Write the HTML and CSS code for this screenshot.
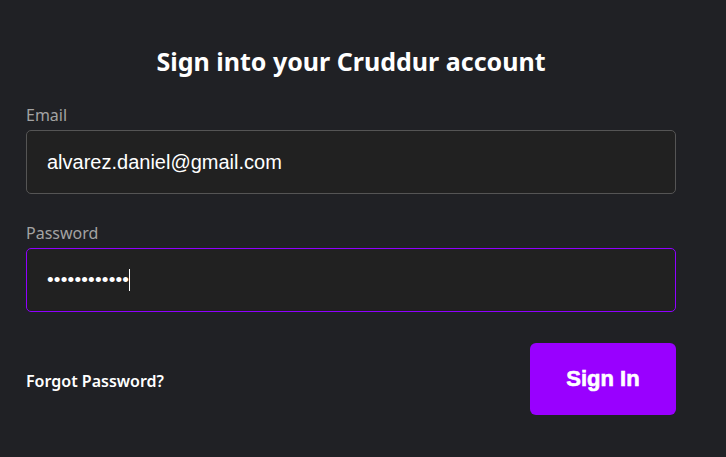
FILE: index.html
```html
<!DOCTYPE html>
<html>
<head>
<meta charset="utf-8">
<link rel="stylesheet" href="styles.css">
</head>
<body>
<main class="signin">
  <h1 class="title">Sign into your Cruddur account</h1>
  <div class="field field-email">
    <label class="label">Email</label>
    <div class="input">alvarez.daniel@gmail.com</div>
  </div>
  <div class="field">
    <label class="label">Password</label>
    <div class="input focused"><span class="dots">••••••••••••</span><span class="caret"></span></div>
  </div>
  <div class="actions">
    <a class="forgot">Forgot Password?</a>
    <button class="submit">Sign In</button>
  </div>
</main>
</body>
</html>
```
FILE: styles.css
```css
html, body {
  margin: 0;
  padding: 0;
  background: #202125;
  height: 100%;
}
body {
  font-family: "Noto Sans", "Open Sans", sans-serif;
  color: #fff;
}
.signin {
  width: 650px;
  margin-left: 26px;
  padding-top: 44px;
  display: flex;
  flex-direction: column;
}
.title {
  margin: 0 0 26px;
  text-align: center;
  font-size: 25px;
  font-weight: 700;
  line-height: 34px;
}
.field {
  display: flex;
  flex-direction: column;
}
.field-email {
  margin-bottom: 28px;
}
.label {
  color: #a3a3a3;
  font-size: 16px;
  line-height: 22px;
  margin-bottom: 4px;
}
.input {
  box-sizing: border-box;
  height: 64px;
  border: 1px solid #555555;
  border-radius: 5px;
  background: #212121;
  padding: 0 20px;
  display: flex;
  align-items: center;
  font-family: "Liberation Sans", Arial, sans-serif;
  font-size: 20px;
  color: #fff;
}
.input.focused {
  border-color: #8f00ff;
}
.dots {
  font-size: 19px;
  letter-spacing: 0.2px;
}
.caret {
  display: inline-block;
  width: 1px;
  height: 22px;
  background: #fff;
}
.actions {
  margin-top: 31px;
  display: flex;
  align-items: center;
  justify-content: space-between;
}
.forgot {
  font-size: 16px;
  font-weight: 600;
  color: #fff;
  margin-top: 4px;
}
.submit {
  width: 146px;
  height: 72px;
  border: none;
  border-radius: 6px;
  background: #9900ff;
  color: #fff;
  font-family: "Liberation Sans", Arial, sans-serif;
  font-size: 22px;
  font-weight: 700;
  -webkit-text-stroke: 0.6px #fff;
}
```
